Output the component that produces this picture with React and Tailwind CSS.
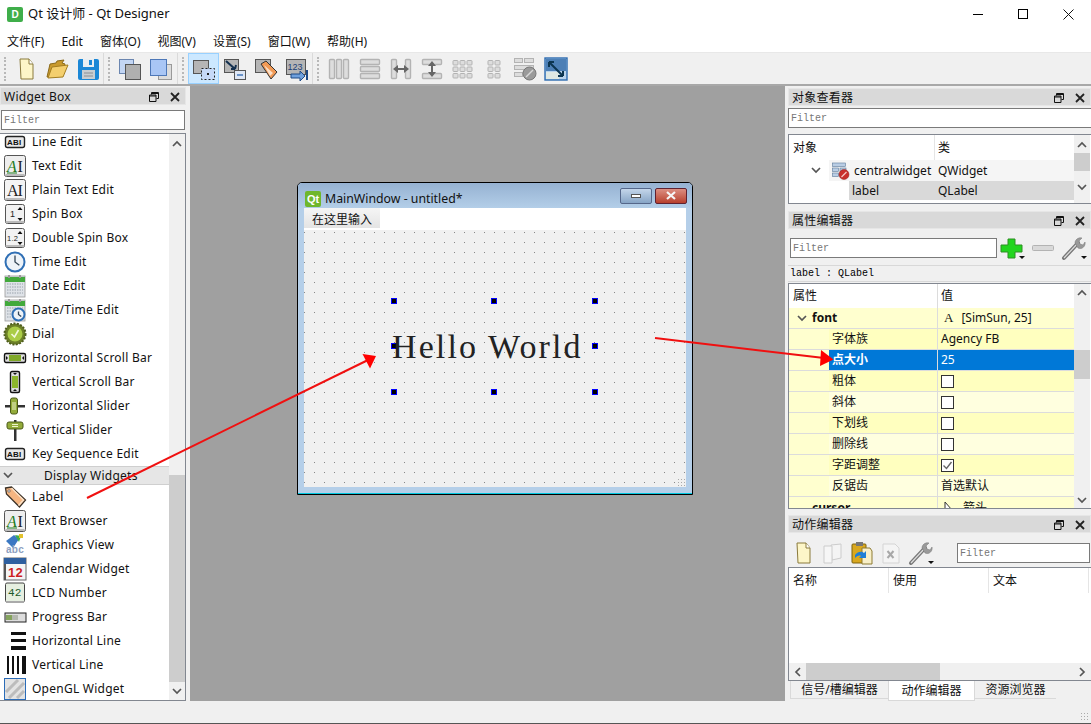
import React from 'react';

const Svg = ({ w = 24, h = 24, children }) => (
  <svg width={w} height={h} viewBox={`0 0 ${w} ${h}`} className="shrink-0 block">{children}</svg>
);

// widget box icons
const LineEditIcon = () => (
  <Svg>
    <rect x="2.5" y="6.5" width="19" height="11" rx="2" fill="#e8e8e8" stroke="#222" strokeWidth="1.4" />
    <text x="4" y="15" fontSize="8" fontWeight="700" fontFamily="Liberation Sans" fill="#111">ABI</text>
  </Svg>
);
const AiIcon = ({ color = '#222', plain }) => (
  <Svg>
    <rect x="1.5" y="1.5" width="21" height="21" rx="2" fill={plain ? '#f4f4f4' : '#eeeeee'} stroke="#555" />
    <rect x="2.5" y="20" width="19" height="2" fill="#bbb" />
    <text x="4" y="18" fontSize="16" fontFamily="Liberation Serif" fontStyle={plain ? 'normal' : 'italic'} fill={color}>A</text>
    <text x="14.5" y="18" fontSize="16" fontFamily="Liberation Serif" fill="#222">I</text>
    {!plain && <rect x="4" y="18.5" width="10" height="1" fill="#1d7a1d" />}
  </Svg>
);
const SpinIcon = ({ label }) => (
  <Svg>
    <rect x="2.5" y="2.5" width="19" height="19" rx="2" fill="#f2f2f2" stroke="#555" />
    <rect x="3" y="19" width="18" height="2" fill="#bbb" />
    <text x={label.length > 1 ? 4 : 7} y="15" fontSize={label.length > 1 ? 7.5 : 9} fontFamily="Liberation Sans" fill="#222">{label}</text>
    <path d="M17 5l-2.5 3h5zM17 19l-2.5-3h5z" fill="#111" />
  </Svg>
);
const ClockFace = ({ cx = 12, cy = 12, r = 9.5 }) => (
  <g>
    <circle cx={cx} cy={cy} r={r} fill="#eef3f8" stroke="#2f6fb5" strokeWidth="2" />
    <path d={`M${cx} ${cy - r + 3}V${cy}l${r / 2.2} ${r / 3}`} fill="none" stroke="#345" strokeWidth="1.3" />
  </g>
);
const ClockIcon = () => <Svg><ClockFace /></Svg>;
const CalendarIcon = ({ clock }) => (
  <Svg>
    <rect x="2" y="2" width="20" height="21" fill="#dfe3e8" stroke="#999" strokeWidth="0.8" />
    <rect x="2" y="3" width="20" height="5" fill="#42a93c" />
    <rect x="5" y="1" width="2" height="3" fill="#999" />
    <rect x="16" y="1" width="2" height="3" fill="#999" />
    {[10, 13, 16, 19].map((y) => (
      <path key={y} d={`M4 ${y}H20`} stroke="#9aa3ad" strokeDasharray="1.5 1" />
    ))}
    {clock && <ClockFace cx={15.5} cy={16.5} r={6} />}
  </Svg>
);
const DialIcon = () => (
  <Svg>
    <circle cx="12" cy="12" r="10.5" fill="#6c7f28" stroke="#4f5d1e" strokeDasharray="2 1.4" strokeWidth="2" />
    <circle cx="12" cy="12" r="7.5" fill="#aacc46" />
    <path d="M8.5 12l3 3 4-7" fill="none" stroke="#f3f8dc" strokeWidth="1.6" />
  </Svg>
);
const HScrollIcon = () => (
  <Svg>
    <rect x="1.5" y="7.5" width="21" height="9" rx="1.5" fill="#ddd" stroke="#111" strokeWidth="1.4" />
    <rect x="6" y="9" width="12" height="6" fill="#7fa828" />
    <path d="M5 12l-2-2v4zM19 12l2-2v4z" fill="#111" />
  </Svg>
);
const VScrollIcon = () => (
  <Svg>
    <rect x="7.5" y="1.5" width="9" height="21" rx="1.5" fill="#ddd" stroke="#111" strokeWidth="1.4" />
    <rect x="9" y="6" width="6" height="12" fill="#8cb52c" />
    <path d="M12 5l-2-2h4zM12 19l-2 2h4z" fill="#111" />
  </Svg>
);
const HSliderIcon = () => (
  <Svg>
    <rect x="2" y="11" width="20" height="2.5" fill="#333" />
    <rect x="7.5" y="4" width="7" height="16" rx="2" fill="#93ab3a" stroke="#4b5a18" />
    <path d="M10 8v8M12 8v8" stroke="#eef3cc" />
  </Svg>
);
const VSliderIcon = () => (
  <Svg>
    <rect x="11" y="2" width="2.5" height="21" fill="#333" />
    <rect x="4" y="4" width="16" height="7" rx="2" fill="#93ab3a" stroke="#4b5a18" />
    <path d="M9 6.5h6M9 8.5h6" stroke="#eef3cc" />
  </Svg>
);
const TagIcon = () => (
  <Svg>
    <path d="M2.5 3l6-1 14 13-6 7L3.5 9z" fill="#f5b581" stroke="#3a3026" strokeWidth="1.3" />
    <path d="M8.5 3l12 12-5 5.5" fill="none" stroke="#fbe0c4" strokeWidth="1.5" />
    <circle cx="6" cy="6" r="1.2" fill="#fff" stroke="#333" strokeWidth="0.6" />
  </Svg>
);
const GraphicsIcon = () => (
  <Svg>
    <path d="M3 8l8-6 5 4-6 9z" fill="#3b78c2" />
    <path d="M12 2l6 1-2 6z" fill="#3fae49" />
    <rect x="16" y="1" width="4" height="4" fill="#e3c22d" />
    <text x="3" y="20" fontSize="10" fontWeight="700" fontFamily="Liberation Sans" fill="#8da0c0">abc</text>
  </Svg>
);
const Cal12Icon = () => (
  <Svg>
    <rect x="1" y="1" width="22" height="22" fill="#f5f5f5" stroke="#666" />
    <rect x="1" y="1" width="22" height="6" fill="#2e5f9f" />
    <rect x="1" y="7" width="2" height="16" fill="#555" />
    <text x="5" y="20" fontSize="13" fontWeight="700" fontFamily="Liberation Sans" fill="#cc1f1f">12</text>
  </Svg>
);
const LcdIcon = () => (
  <Svg>
    <rect x="2.5" y="2" width="19" height="19" rx="1.5" fill="#e6efe0" stroke="#444" />
    <rect x="3" y="20" width="18" height="2" fill="#aaa" />
    <text x="5" y="15" fontSize="11" fontFamily="Liberation Mono" fill="#1c5a2a">42</text>
  </Svg>
);
const ProgressIcon = () => (
  <Svg>
    <rect x="2" y="8" width="21" height="9" fill="#ddd" stroke="#222" />
    <path d="M4 10v5M6 10v5M8 10v5" stroke="#5f8a28" strokeWidth="1.4" />
    <path d="M10 10v5M12 10v5M14 10v5" stroke="#a3a89c" strokeWidth="1.4" />
  </Svg>
);
const HLineIcon = () => (
  <Svg>
    <rect x="8" y="3" width="15" height="3" fill="#111" />
    <rect x="8" y="10" width="15" height="3" fill="#111" />
    <rect x="8" y="17" width="15" height="4" fill="#111" />
  </Svg>
);
const VLineIcon = () => (
  <Svg>
    <rect x="4" y="3" width="2" height="18" fill="#111" />
    <rect x="9" y="3" width="2" height="18" fill="#111" />
    <rect x="14" y="3" width="2" height="18" fill="#111" />
    <rect x="19" y="3" width="4" height="18" fill="#111" />
  </Svg>
);
const GlIcon = () => (
  <Svg>
    <rect x="1.5" y="1.5" width="21" height="21" fill="#e3e3e3" stroke="#2b6cb8" />
    <path d="M3 15L15 3M6 21L21 6M14 21l7-7" stroke="#bcbcbc" strokeWidth="3" />
  </Svg>
);

// toolbar icons
const NewDoc = ({ dim }) => (
  <Svg>
    <path d="M6 2h9l4 5v15H7z" fill={dim ? '#f1f1f1' : '#fdf6c8'} stroke={dim ? '#ccc' : '#8a7a3c'} />
    <path d="M15 2v5h4" fill="#fff" stroke={dim ? '#ccc' : '#8a7a3c'} />
  </Svg>
);
const OpenFolder = () => (
  <Svg>
    <path d="M2 20L5 7l6-1 1-2 7-1-2 3 3 1-3 12z" fill="#c99a2e" stroke="#8b6a1a" />
    <path d="M3 21l4-11 16-2-5 12z" fill="#f4cf6e" stroke="#a37d20" />
  </Svg>
);
const SaveIcon = () => (
  <Svg>
    <rect x="2" y="2" width="21" height="21" rx="2" fill="#1b87d6" />
    <rect x="7" y="2" width="11" height="8" fill="#e9eef2" />
    <rect x="13" y="3" width="3" height="5" fill="#1b87d6" />
    <rect x="6" y="13" width="13" height="9" fill="#c9cdd1" />
    <path d="M8 16h9M8 19h9" stroke="#8a8f94" />
  </Svg>
);
const SquareA = () => (
  <Svg>
    <rect x="1.5" y="2.5" width="14" height="14" fill="#c3d6f4" stroke="#6b86b0" />
    <rect x="7.5" y="7.5" width="15" height="15" fill="#b0b0b0" stroke="#555" />
  </Svg>
);
const SquareB = () => (
  <Svg>
    <rect x="9.5" y="7.5" width="13" height="15" fill="#dcdcdc" stroke="#999" />
    <rect x="1.5" y="2.5" width="16" height="16" fill="#a9c6f5" stroke="#4e78b8" />
  </Svg>
);
const EditWidgets = () => (
  <Svg>
    <rect x="1.5" y="3.5" width="15" height="13" fill="#b5b5b5" stroke="#555" />
    <rect x="9.5" y="11.5" width="13" height="11" fill="#c6d9f7" stroke="#222" strokeDasharray="2 2" />
    <rect x="15" y="16" width="2" height="2" fill="#222" />
  </Svg>
);
const EditSignals = () => (
  <Svg>
    <rect x="1.5" y="2.5" width="14" height="13" fill="#b5b5b5" stroke="#555" />
    <rect x="11.5" y="13.5" width="11" height="9" fill="#dfe7f4" stroke="#555" />
    <rect x="14" y="17" width="6" height="2" fill="#6a93c8" />
    <path d="M3 4l9 8m0 0l1-4m-1 4l-4 0" stroke="#14304f" strokeWidth="2" fill="none" />
  </Svg>
);
const EditBuddy = () => (
  <Svg>
    <rect x="1.5" y="2.5" width="15" height="13" fill="#b5b5b5" stroke="#555" />
    <path d="M7 7l5-3 11 11-6 7z" fill="#f29a55" stroke="#333" />
    <path d="M10 8l9 8-3 3z" fill="#fbdfc7" />
  </Svg>
);
const EditTab = () => (
  <Svg>
    <rect x="1.5" y="2.5" width="19" height="15" fill="#b5b5b5" stroke="#555" />
    <text x="2.5" y="13" fontSize="9" fontFamily="Liberation Sans" fill="#1b3f77">123</text>
    <path d="M6 17h9v-3l5 5-5 5v-3H6z" fill="#6fa0dc" stroke="#1e4a86" />
    <rect x="21" y="13" width="2" height="10" fill="#1e4a86" />
  </Svg>
);
const Bars = ({ vertical }) => (
  <Svg>
    {[3, 10, 17].map((p) =>
      vertical ? (
        <rect key={p} x={p - 0.5} y="2.5" width="5" height="19" rx="1" fill="#ddd" stroke="#b3b3b3" strokeWidth="1.4" />
      ) : (
        <rect key={p} x="2.5" y={p - 0.5} width="19" height="5" rx="1" fill="#ddd" stroke="#b3b3b3" strokeWidth="1.4" />
      ),
    )}
  </Svg>
);
const SplitH = () => (
  <Svg>
    <rect x="2.5" y="2.5" width="5" height="19" rx="1" fill="#ddd" stroke="#b3b3b3" strokeWidth="1.4" />
    <rect x="16.5" y="2.5" width="5" height="19" rx="1" fill="#ddd" stroke="#b3b3b3" strokeWidth="1.4" />
    <path d="M4 12l5-4v3h6V8l5 4-5 4v-3H9v3z" fill="#666" />
  </Svg>
);
const SplitV = () => (
  <Svg>
    <rect x="2.5" y="2.5" width="19" height="5" rx="1" fill="#ddd" stroke="#b3b3b3" strokeWidth="1.4" />
    <rect x="2.5" y="16.5" width="19" height="5" rx="1" fill="#ddd" stroke="#b3b3b3" strokeWidth="1.4" />
    <path d="M12 4l4 5h-3v6h3l-4 5-4-5h3V9H8z" fill="#666" />
  </Svg>
);
const GridDots = ({ cols }) => (
  <Svg>
    {[0, 1, 2].map((r) =>
      cols.map((c) => (
        <rect key={`${r}${c}`} x={c} y={3.5 + r * 6.5} width="5" height="4.5" rx="0.8" fill="#ddd" stroke="#b3b3b3" />
      )),
    )}
  </Svg>
);
const BreakLayout = () => (
  <Svg>
    <rect x="1.5" y="1.5" width="8" height="4" fill="#ddd" stroke="#b3b3b3" />
    <rect x="11.5" y="1.5" width="9" height="4" fill="#ddd" stroke="#b3b3b3" />
    <rect x="1.5" y="8.5" width="19" height="4" fill="#ddd" stroke="#b3b3b3" />
    <rect x="1.5" y="15.5" width="8" height="4" fill="#ddd" stroke="#b3b3b3" />
    <circle cx="16.5" cy="16.5" r="6.5" fill="#9a9a9a" stroke="#777" />
    <path d="M13 20l7-7" stroke="#d8d8d8" strokeWidth="1.5" />
  </Svg>
);
const AdjustSize = () => (
  <Svg>
    <rect x="1" y="1" width="22" height="22" fill="#b9d3ec" stroke="#2d6bb0" strokeWidth="1.4" />
    <rect x="2" y="2" width="20" height="12" fill="#4d7fb5" />
    <rect x="2" y="15" width="13" height="7" fill="#dfe8e4" />
    <path d="M5 5l14 14M5 5h5M5 5v5M19 19h-5M19 19v-5" stroke="#0c3550" strokeWidth="2" fill="none" />
  </Svg>
);
const Wrench = () => (
  <Svg w={26} h={26}>
    <path d="M3 23L17 8" stroke="#777" strokeWidth="4" strokeLinecap="round" />
    <path d="M3 23L17 8" stroke="#ddd" strokeWidth="1.2" />
    <path d="M14 8c0-3 3-6 7-5l-3 3 1 3 3 1 2-3c1 4-3 8-7 6z" fill="#999" stroke="#777" strokeWidth="0.5" />
    <path d="M21 22h6l-3 3z" fill="#111" transform="translate(-1,-1)" />
  </Svg>
);
const PlusIcon = () => (
  <Svg w={26} h={24}>
    <path d="M8 3h7v6h7v7h-7v6H8v-6H1V9h7z" fill="#22d51e" stroke="#2c8f22" />
    <path d="M19 20h6l-3 3z" fill="#111" />
  </Svg>
);
const MinusIcon = () => (
  <Svg w={24} h={24}>
    <rect x="1.5" y="9.5" width="21" height="5" rx="1" fill="#d9d9d9" stroke="#b3b3b3" />
  </Svg>
);
const CopyDocs = () => (
  <Svg>
    <path d="M10 4l10-1v14l-9 2z" fill="#f4f4f4" stroke="#ccc" />
    <path d="M3 5h8v17H3z" fill="#f6f6f6" stroke="#ccc" />
  </Svg>
);
const PasteIcon = () => (
  <Svg>
    <rect x="2" y="3" width="14" height="19" rx="1" fill="#d9a81f" stroke="#7c6210" />
    <rect x="6" y="1" width="7" height="4" fill="#777" />
    <path d="M12 7h8l2 3v13H12z" fill="#f8efc8" stroke="#8d7a32" />
    <path d="M5 14c3-4 7-4 9-2l2-2v7h-7l2-2c-2-1-4 0-6 2z" fill="#1e7ed6" />
  </Svg>
);
const DeleteDoc = () => (
  <Svg>
    <path d="M4 3h12l4 4v15H4z" fill="#f4f4f4" stroke="#d4d4d4" />
    <path d="M8.5 10l6 7m0-7l-6 7" stroke="#a8a8a8" strokeWidth="2" />
  </Svg>
);
const ObjIcon = () => (
  <Svg w={18} h={18}>
    <rect x="0.5" y="1" width="13" height="3.5" fill="#b9cde4" stroke="#5a7899" strokeWidth="0.6" />
    <rect x="0.5" y="6" width="6" height="3.5" fill="#b9cde4" stroke="#5a7899" strokeWidth="0.6" />
    <rect x="8" y="6" width="6" height="3.5" fill="#b9cde4" stroke="#5a7899" strokeWidth="0.6" />
    <rect x="0.5" y="11" width="6" height="3.5" fill="#b9cde4" stroke="#5a7899" strokeWidth="0.6" />
    <circle cx="12" cy="12.5" r="5" fill="#c9302c" stroke="#8f1f1b" strokeWidth="0.5" />
    <path d="M9.5 15l5-5" stroke="#f4c9c7" strokeWidth="1.2" />
  </Svg>
);

const Chevron = ({ up, className = '' }) => (
  <svg width="10" height="7" viewBox="0 0 10 7" className={`shrink-0 block ${className}`}>
    <path d={up ? 'M1 6l4-4 4 4' : 'M1 1l4 4 4-4'} fill="none" stroke="#555" strokeWidth="1.7" />
  </svg>
);
const ChevronSide = ({ right }) => (
  <svg width="7" height="10" viewBox="0 0 7 10" className="shrink-0 block">
    <path d={right ? 'M1 1l4 4-4 4' : 'M6 1L2 5l4 4'} fill="none" stroke="#555" strokeWidth="1.7" />
  </svg>
);

const mono = "font-['Liberation_Mono',monospace]";

const FilterBox = ({ className = '' }) => (
  <div className={`h-5 shrink-0 bg-white border border-[#7a7a7a] flex items-center pl-[2px] pt-[1px] text-[10px] text-[#777] overflow-hidden ${mono} ${className}`}>
    Filter
  </div>
);

const DockTitle = ({ title, className = '' }) => (
  <div className={`h-[18px] shrink-0 bg-[#d9d9d9] border border-[#e6e6e6] flex items-center justify-between pl-[3px] pt-[2px] pr-[5px] text-[12px] tracking-[0.25px] text-[#111] ${className}`}>
    <span>{title}</span>
    <div className="flex items-center gap-[11px]">
      <svg width="10" height="10" viewBox="0 0 10 10" className="block">
        <path d="M2.5 2.5v-2h7v6h-2M.5 3h6.5v6.500H.5zM.5 4h6.500M3 1.500h6.500" fill="none" stroke="#111" />
      </svg>
      <svg width="10" height="10" viewBox="0 0 10 10" className="block">
        <path d="M1 1l8 8M9 1l-8 8" stroke="#222" strokeWidth="1.800" />
      </svg>
    </div>
  </div>
);

const topGroups = [
  [<NewDoc />, <OpenFolder />, <SaveIcon />],
  [<SquareA />, <SquareB />],
  [<EditWidgets />, <EditSignals />, <EditBuddy />, <EditTab />],
  [
    <Bars vertical />,
    <Bars />,
    <SplitH />,
    <SplitV />,
    <GridDots cols={[2, 9, 16]} />,
    <GridDots cols={[6, 13]} />,
    <BreakLayout />,
    <AdjustSize />,
  ],
];

const inputRows = [
  ['Line Edit', <LineEditIcon />],
  ['Text Edit', <AiIcon color="#1d7a1d" />],
  ['Plain Text Edit', <AiIcon plain />],
  ['Spin Box', <SpinIcon label="1" />],
  ['Double Spin Box', <SpinIcon label="1.2" />],
  ['Time Edit', <ClockIcon />],
  ['Date Edit', <CalendarIcon />],
  ['Date/Time Edit', <CalendarIcon clock />],
  ['Dial', <DialIcon />],
  ['Horizontal Scroll Bar', <HScrollIcon />],
  ['Vertical Scroll Bar', <VScrollIcon />],
  ['Horizontal Slider', <HSliderIcon />],
  ['Vertical Slider', <VSliderIcon />],
  ['Key Sequence Edit', <LineEditIcon />],
];
const displayRows = [
  ['Label', <TagIcon />],
  ['Text Browser', <AiIcon color="#1d7a1d" />],
  ['Graphics View', <GraphicsIcon />],
  ['Calendar Widget', <Cal12Icon />],
  ['LCD Number', <LcdIcon />],
  ['Progress Bar', <ProgressIcon />],
  ['Horizontal Line', <HLineIcon />],
  ['Vertical Line', <VLineIcon />],
  ['OpenGL Widget', <GlIcon />],
];

const WidgetRow = ({ name, icon }) => (
  <div className="h-6 shrink-0 flex items-center pl-[3px] gap-[5px] text-[12px] tracking-[0.25px] text-[#111]">
    <div className="w-6 h-6 shrink-0">{icon}</div>
    <span className="whitespace-nowrap">{name}</span>
  </div>
);

const Check = ({ checked }) => (
  <div className="w-[13px] h-[13px] bg-white border border-[#333] flex items-center justify-center">
    {checked && (
      <svg width="11" height="11" viewBox="0 0 11 11" className="block">
        <path d="M1.500 5.500l3 3 5-6.500" fill="none" stroke="#666" strokeWidth="1.400" />
      </svg>
    )}
  </div>
);

const props = [
  { name: '字体族', value: 'Agency FB', bg: 'bg-[#ffffbf]' },
  { name: '点大小', value: '25', selected: true },
  { name: '粗体', check: false, bg: 'bg-[#ffffbf]' },
  { name: '斜体', check: false, bg: 'bg-[#ffffdf]' },
  { name: '下划线', check: false, bg: 'bg-[#ffffbf]' },
  { name: '删除线', check: false, bg: 'bg-[#ffffdf]' },
  { name: '字距调整', check: true, bg: 'bg-[#ffffbf]' },
  { name: '反锯齿', value: '首选默认', bg: 'bg-[#ffffdf]' },
];

const PropRow = ({ p }) => (
  <div className="h-[21px] shrink-0 flex border-b border-[#dcdcdc] bg-[#ffffcf]">
    <div className="w-10 shrink-0" />
    <div className={`w-[109px] shrink-0 flex items-center pl-[3px] border-r border-[#dcdcdc] ${p.selected ? 'bg-[#0078d7] text-white font-bold' : p.bg}`}>
      {p.name}
    </div>
    <div className={`flex-1 flex items-center pl-[3px] ${p.selected ? 'bg-[#0078d7] text-white' : p.bg}`}>
      {p.check === undefined ? p.value : <Check checked={p.check} />}
    </div>
  </div>
);

const Handle = ({ className }) => (
  <div className={`absolute w-[6px] h-[6px] bg-black border border-[#0000ff] ${className}`} />
);

export default function App() {
  return (
    <div className="relative w-[1091px] h-[724px] overflow-hidden flex flex-col bg-[#f0f0f0] text-[12px] text-[#111] font-['Noto_Sans','Noto_Sans_CJK_SC',sans-serif]">
      {/* window title */}
      <div className="h-7 shrink-0 bg-white flex items-center">
        <div className="ml-[7px] w-4 h-[15px] rounded-[2px] bg-[#3fae4a] flex items-center justify-center text-white text-[10px] font-bold font-['Liberation_Sans',sans-serif]">D</div>
        <span className="ml-[5px] text-[13px]">Qt 设计师 - Qt Designer</span>
        <div className="ml-auto flex items-center">
          <div className="w-[45px] h-7 flex items-center justify-center">
            <div className="w-[10px] h-px bg-black" />
          </div>
          <div className="w-[45px] h-7 flex items-center justify-center">
            <div className="w-[10px] h-[10px] border border-black" />
          </div>
          <div className="w-[46px] h-7 flex items-center justify-center">
            <svg width="11" height="11" viewBox="0 0 11 11" className="block">
              <path d="M.5.500l10 10M10.500.500l-10 10" stroke="#111" />
            </svg>
          </div>
        </div>
      </div>
      {/* menu */}
      <div className="h-6 shrink-0 bg-white flex items-center gap-[17px] pl-[7px] pt-[3px] text-[12px]">
        {['文件(F)', 'Edit', '窗体(O)', '视图(V)', '设置(S)', '窗口(W)', '帮助(H)'].map((m) => (
          <span key={m} className="whitespace-nowrap">{m}</span>
        ))}
      </div>
      {/* toolbar */}
      <div className="h-[34px] shrink-0 flex items-center border-t border-[#e8e8e8] border-b-[2px] border-b-[#a8a8a8]">
        {topGroups.map((group, i) => (
          <div key={i} className={`h-full flex items-center ${i < 3 ? 'border-r border-[#dadada]' : ''} ${i === 1 ? 'pr-[1px]' : ''}`}>
            <div className="w-[10px] h-[24px] flex justify-center">
              <div className="w-[2px] h-full border-l-2 border-dotted border-[#b8b8b8]" />
            </div>
            {group.map((icon, j) => (
              <div
                key={j}
                className={`w-[31px] h-[31px] flex items-center justify-center ${i === 2 && j === 0 ? 'bg-[#cce8ff] border border-[#99d1ff]' : ''}`}
              >
                {icon}
              </div>
            ))}
          </div>
        ))}
      </div>

      {/* main area */}
      <div className="h-[615px] shrink-0 flex">
        {/* widget box */}
        <div className="w-[187px] shrink-0 flex flex-col pt-[1px] pr-[1px]">
          <DockTitle title="Widget Box" />
          <FilterBox className="mt-[5px] ml-[1px] mr-[1px]" />
          <div className="mt-[3px] h-[568px] shrink-0 flex border border-l-0 border-[#828790] bg-white overflow-hidden">
            <div className="flex-1 overflow-hidden flex flex-col -mt-[4px]">
              {inputRows.map(([n, ic]) => (
                <WidgetRow key={n} name={n} icon={ic} />
              ))}
              <div className="h-[19px] shrink-0 bg-[#e6e6e6] border-y border-[#cfcfcf] flex items-center relative tracking-[0.25px]">
                <Chevron className="ml-[3px]" />
                <span className="absolute left-[44px]">Display Widgets</span>
              </div>
              {displayRows.map(([n, ic]) => (
                <WidgetRow key={n} name={n} icon={ic} />
              ))}
            </div>
            <div className="w-4 shrink-0 bg-[#f0f0f0] flex flex-col items-center">
              <div className="h-[18px] flex items-center"><Chevron up /></div>
              <div className="flex-1" />
              <div className="w-full h-[207px] bg-[#cdcdcd]" />
              <div className="h-[18px] flex items-center"><Chevron /></div>
            </div>
          </div>
        </div>

        {/* form area */}
        <div className="relative w-[595px] shrink-0 ml-[3px] bg-[#a0a0a0]">
          <div className="absolute left-[107px] top-[96px] w-[396px] h-[313px] border border-black rounded-t-[5px] bg-[#b5cfe9] flex flex-col overflow-hidden">
            <div className="h-[25px] shrink-0 flex items-center bg-gradient-to-b from-[#96b2d2] to-[#b3cee8]">
              <div className="ml-[7px] mt-[7px] w-4 h-4 rounded-[2px] bg-[#6fb72c] flex items-center justify-center text-white text-[11px] font-bold font-['Liberation_Sans',sans-serif]">Qt</div>
              <span className="ml-1 mt-[7px] text-[12.300px]">MainWindow - untitled*</span>
              <div className="ml-auto mr-[5px] flex gap-[3px]">
                <div className="w-8 h-4 rounded-[2px] border border-[#55678a] bg-gradient-to-b from-[#c4d6ea] to-[#87a5c6] flex items-center justify-center">
                  <div className="w-[10px] h-[4px] bg-white border border-[#555]" />
                </div>
                <div className="w-8 h-4 rounded-[2px] border border-[#5f2130] bg-gradient-to-b from-[#dc8f82] to-[#b73e2c] flex items-center justify-center">
                  <svg width="12" height="9" viewBox="0 0 12 9" className="block">
                    <path d="M2 1l8 7M10 1l-8 7" stroke="#f6f6f6" strokeWidth="2.200" />
                  </svg>
                </div>
              </div>
            </div>
            <div className="flex-1 mx-[6px] mb-[6px] flex flex-col bg-[#f0f0f0] min-h-0">
              <div className="h-[22px] shrink-0 bg-white flex">
                <div className="w-[76px] h-5 pt-[3px] bg-gradient-to-b from-[#f5f5f5] to-[#e4e4e4] flex items-center justify-center text-[12px]">在这里输入</div>
              </div>
              <div className="relative flex-1 bg-[#f0f0f0] bg-[radial-gradient(circle_at_0.5px_2.500px,#888_0.5px,transparent_0.7px)] bg-[size:10px_10px]">
                <Handle className="left-[87px] top-[68px]" />
                <Handle className="left-[187px] top-[68px]" />
                <Handle className="left-[288px] top-[68px]" />
                <Handle className="left-[87px] top-[113px]" />
                <Handle className="left-[288px] top-[113px]" />
                <Handle className="left-[87px] top-[159px]" />
                <Handle className="left-[187px] top-[159px]" />
                <Handle className="left-[288px] top-[159px]" />
                <div className="absolute left-[88px] top-[97px] text-[34px] leading-[40px] tracking-[2.100px] text-[#222] whitespace-nowrap font-['Liberation_Serif',serif]">Hello World</div>
                <div className="absolute right-[1px] bottom-[1px] w-2 h-2 bg-[radial-gradient(circle,#aaa_1px,transparent_1px)] bg-[size:3px_3px]" />
              </div>
            </div>
            <div className="h-px shrink-0 bg-[#00c8e0]" />
          </div>
        </div>

        {/* right docks */}
        <div className="w-[304px] ml-[2px] shrink-0 flex flex-col">
          <DockTitle title="对象查看器" className="mt-[2px] ml-[1px]" />
          <FilterBox className="mt-[2px] ml-[1px] -mr-1" />
          <div className="mt-[6px] ml-[1px] h-[70px] shrink-0 flex border border-r-0 border-[#828790] bg-white overflow-hidden">
            <div className="flex-1 min-w-0 flex flex-col">
              <div className="h-[25px] shrink-0 flex">
                <div className="w-[146px] pl-1 flex items-center border-r border-[#e5e5e5]">对象</div>
                <div className="flex-1 pl-[3px] flex items-center">类</div>
              </div>
              <div className="h-[21px] shrink-0 flex items-center">
                <div className="w-10 shrink-0 flex justify-end pr-[8px]"><Chevron /></div>
                <div className="flex-1 h-full bg-[#f5f5f5] flex items-center pl-[3px]">
                  <ObjIcon />
                  <span className="ml-[4px] w-[84px] shrink-0 whitespace-nowrap">centralwidget</span>
                  <span>QWidget</span>
                </div>
              </div>
              <div className="h-[19px] shrink-0 flex items-center">
                <div className="w-[60px] shrink-0" />
                <div className="flex-1 h-full bg-[#d9d9d9] flex items-center pl-[3px]">
                  <span className="w-[86px] shrink-0">label</span>
                  <span>QLabel</span>
                </div>
              </div>
            </div>
            <div className="w-[16px] mr-[1px] shrink-0 bg-[#f0f0f0] flex flex-col items-center">
              <div className="h-[18px] flex items-center"><Chevron up /></div>
              <div className="w-full h-[18px] bg-[#cdcdcd]" />
              <div className="flex-1 flex items-center"><Chevron /></div>
            </div>
          </div>

          <DockTitle title="属性编辑器" className="mt-[7px] ml-[1px]" />
          <div className="mt-[7px] h-6 shrink-0 flex items-center pl-[3px]">
            <FilterBox className="w-[207px]" />
            <div className="ml-[3px]"><PlusIcon /></div>
            <div className="ml-[5px]"><MinusIcon /></div>
            <div className="ml-[6px]"><Wrench /></div>
          </div>
          <div className={`mt-[5px] ml-[1px] h-[17px] shrink-0 border-y border-[#d8d8d8] flex items-center pl-[2px] text-[10px] text-black ${mono}`}>label : QLabel</div>
          <div className="mt-[1px] ml-[1px] h-[226px] shrink-0 flex border border-r-0 border-[#828790] bg-white overflow-hidden">
            <div className="flex-1 min-w-0 flex flex-col overflow-hidden">
              <div className="h-6 shrink-0 flex bg-white">
                <div className="w-[149px] pl-1 flex items-center border-r border-[#dcdcdc]">属性</div>
                <div className="flex-1 pl-[3px] flex items-center">值</div>
              </div>
              <div className="h-[21px] shrink-0 flex border-b border-[#dcdcdc] bg-[#ffffcf]">
                <div className="w-[23px] shrink-0 flex items-center justify-end pr-[5px]"><Chevron /></div>
                <div className="w-[126px] shrink-0 flex items-center border-r border-[#dcdcdc] font-bold">font</div>
                <div className="flex-1 flex items-center pl-[6px]">
                  <span className="font-['Liberation_Serif',serif] text-[13px]">A</span>
                  <span className="ml-[8px]">[SimSun, 25]</span>
                </div>
              </div>
              {props.map((p) => (
                <PropRow key={p.name} p={p} />
              ))}
              <div className="h-[21px] shrink-0 flex bg-[#ffffcf]">
                <div className="w-[149px] shrink-0 pl-[23px] flex items-center border-r border-[#dcdcdc] font-bold">cursor</div>
                <div className="flex-1 flex items-center pl-[6px]">
                  <svg width="10" height="14" viewBox="0 0 10 14" className="block">
                    <path d="M1 1v11l3-3 4 0z" fill="#fff" stroke="#333" />
                  </svg>
                  <span className="ml-[9px]">箭头</span>
                </div>
              </div>
            </div>
            <div className="w-[16px] mr-[1px] shrink-0 bg-[#f0f0f0] flex flex-col items-center">
              <div className="h-[16px] flex items-center"><Chevron up /></div>
              <div className="mt-[50px] w-full h-[29px] bg-[#cdcdcd]" />
              <div className="flex-1" />
              <div className="h-[16px] flex items-center"><Chevron /></div>
            </div>
          </div>

          <DockTitle title="动作编辑器" className="mt-[6px] ml-[1px]" />
          <div className="mt-[7px] h-[26px] shrink-0 flex items-center">
            <div className="ml-[4px]"><NewDoc /></div>
            <div className="ml-[6px]"><CopyDocs /></div>
            <div className="ml-[5px]"><PasteIcon /></div>
            <div className="ml-[5px]"><DeleteDoc /></div>
            <div className="ml-[5px]"><Wrench /></div>
            <FilterBox className="ml-[23px] w-[133px]" />
          </div>
          <div className="mt-[1px] ml-[1px] h-[114px] shrink-0 flex flex-col border border-r-0 border-[#828790] bg-white">
            <div className="h-[25px] shrink-0 flex">
              {['名称', '使用', '文本'].map((t) => (
                <div key={t} className="w-[100px] pl-1 flex items-center border-r border-[#e5e5e5]">{t}</div>
              ))}
            </div>
            <div className="flex-1" />
            <div className="h-[17px] shrink-0 bg-[#f0f0f0] flex items-center relative">
              <div className="w-[17px] flex justify-center"><ChevronSide /></div>
              <div className="w-[134px] h-full bg-[#cdcdcd]" />
              <div className="ml-auto w-[17px] flex justify-center"><ChevronSide right /></div>
            </div>
          </div>
          <div className="flex pl-[3px] text-[12px]">
            <div className="w-[98px] h-[18px] border-b border-l border-[#d9d9d9] flex items-center justify-center">信号/槽编辑器</div>
            <div className="w-[87px] h-5 bg-white border border-t-0 border-[#d9d9d9] flex items-center justify-center">动作编辑器</div>
            <div className="w-[81px] h-[18px] border-b border-[#d9d9d9] flex items-center justify-center">资源浏览器</div>
          </div>
        </div>
      </div>

      {/* status bar */}
      <div className="h-[23px] shrink-0 border-b border-[#555] flex justify-end items-end pr-[1px] pb-[1px]">
        <div className="w-[10px] h-[10px] bg-[radial-gradient(circle,#aaa_1px,transparent_1px)] bg-[size:3px_3px]" />
      </div>

      {/* red annotation arrows */}
      <svg width="1091" height="724" viewBox="0 0 1091 724" className="absolute left-0 top-0 pointer-events-none">
        <path d="M87 498L368 360" stroke="#f01010" strokeWidth="2" />
        <path d="M376 356L362.500 354L370 368.500z" fill="#ff0000" />
        <path d="M655 338L824 358" stroke="#f01010" strokeWidth="2" />
        <path d="M833.500 359.500L821 350L820 366z" fill="#ff0000" />
      </svg>
    </div>
  );
}
